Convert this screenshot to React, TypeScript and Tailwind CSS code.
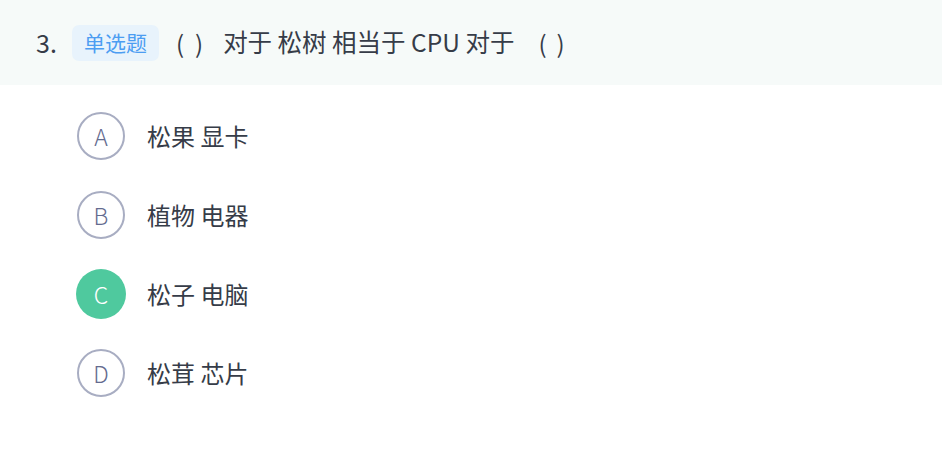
import React from "react";

const options = [
  { key: "A", text: "松果 显卡", selected: false },
  { key: "B", text: "植物 电器", selected: false },
  { key: "C", text: "松子 电脑", selected: true },
  { key: "D", text: "松茸 芯片", selected: false },
];

function Paren({ gap }: { gap: string }) {
  return (
    <span className="flex items-center text-[24px]">
      <span className={gap}>(</span>
      <span>)</span>
    </span>
  );
}

export default function App() {
  return (
    <div
      className="w-[942px] h-[459px] bg-white text-[#363c48]"
      style={{ fontFamily: '"Noto Sans CJK SC", "Noto Sans", sans-serif' }}
    >
      <div className="h-[85px] bg-[#f6faf9] flex items-center pl-[36px]">
        <span className="text-[25px] w-[36px]">3.</span>
        <span className="h-[36px] px-[12px] rounded-[7px] bg-[#e8f3fc] text-[#4c9df2] text-[21px] flex items-center">
          单选题
        </span>
        <span className="ml-[17px]">
          <Paren gap="w-[19px]" />
        </span>
        <span className="text-[24.5px] ml-[20px] whitespace-pre">对于 松树 相当于 CPU 对于</span>
        <span className="ml-[24px]">
          <Paren gap="w-[18px]" />
        </span>
      </div>
      <div className="flex flex-col pl-[77px] pt-[27px] gap-[31px]">
        {options.map((o) => (
          <div key={o.key} className="flex items-center h-[48px]">
            {o.selected ? (
              <div className="w-[50px] h-[50px] rounded-full bg-[#4fc99e] text-white flex items-center justify-center text-[23px] font-light -ml-[1px]">
                {o.key}
              </div>
            ) : (
              <div className="w-[48px] h-[48px] rounded-full border-2 border-[#a8adc2] text-[#646b8f] flex items-center justify-center text-[23px] font-light">
                {o.key}
              </div>
            )}
            <span className={"text-[24px] whitespace-pre " + (o.selected ? "ml-[21px]" : "ml-[22px]")}>{o.text}</span>
          </div>
        ))}
      </div>
    </div>
  );
}
